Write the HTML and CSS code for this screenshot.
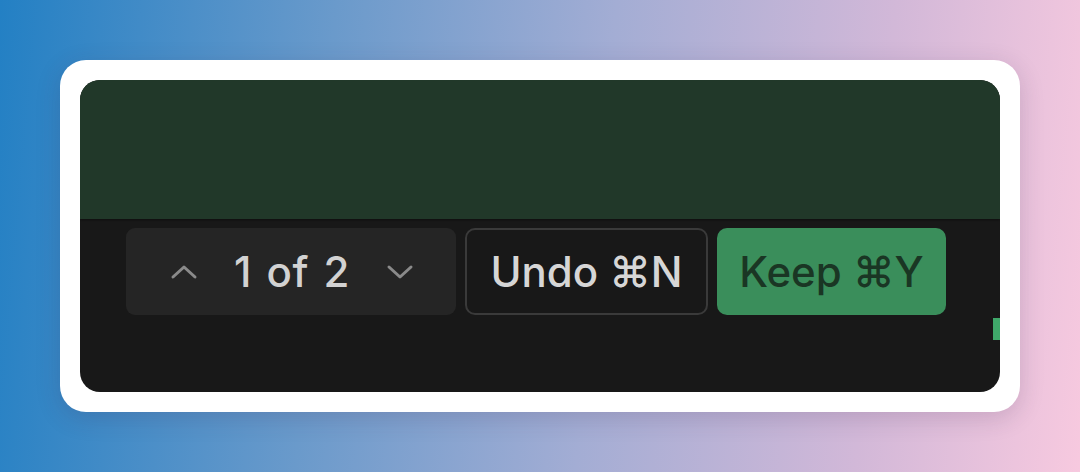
FILE: index.html
```html
<!DOCTYPE html>
<html>
<head>
<meta charset="utf-8">
<link rel="stylesheet" href="styles.css">
</head>
<body>
<div class="frame">
  <div class="card">
    <div class="panel">
      <div class="editor-top"></div>
      <div class="editor-bottom">
        <div class="actions">
          <div class="nav">
            <svg class="chev" viewBox="0 0 28 16" width="28" height="16"><path d="M3 13 L14 3 L25 13" fill="none" stroke="#8a8a8a" stroke-width="3" stroke-linecap="round" stroke-linejoin="round"/></svg>
            <span class="count">1 of 2</span>
            <svg class="chev" viewBox="0 0 28 16" width="28" height="16"><path d="M3 3 L14 13 L25 3" fill="none" stroke="#8a8a8a" stroke-width="3" stroke-linecap="round" stroke-linejoin="round"/></svg>
          </div>
          <div class="btn undo">Undo ⌘N</div>
          <div class="btn keep">Keep ⌘Y</div>
        </div>
        <div class="marker"></div>
      </div>
    </div>
  </div>
</div>
</body>
</html>
```
FILE: styles.css
```css
* { box-sizing: border-box; }
html, body { margin: 0; padding: 0; }
body {
  width: 1080px;
  height: 472px;
  overflow: hidden;
  background: linear-gradient(95deg, #2380c4 0%, #6a9acb 30%, #a3add4 55%, #d2b8d8 80%, #f7c9df 100%);
  font-family: "Inter", "Liberation Sans", sans-serif;
}
.frame {
  padding: 60px;
  height: 100%;
}
.card {
  background: #ffffff;
  border-radius: 26px;
  padding: 20px;
  height: 352px;
  box-shadow: 0 6px 24px rgba(60, 40, 80, 0.18);
}
.panel {
  height: 312px;
  border-radius: 20px;
  overflow: hidden;
  background: #181818;
  display: flex;
  flex-direction: column;
}
.editor-top {
  height: 139px;
  background: #213829;
  box-shadow: 0 1px 2px rgba(0,0,0,0.4);
}
.editor-bottom {
  flex: 1;
  position: relative;
  padding: 9px 0 0 46px;
}
.actions {
  display: flex;
  gap: 9px;
  height: 87px;
}
.nav {
  width: 330px;
  background: #252525;
  border-radius: 9px;
  display: flex;
  align-items: center;
  justify-content: space-between;
  padding: 0 42px 0 44px;
}
.count {
  color: #d2d2d2;
  font-size: 42px;
  font-weight: 500;
  word-spacing: 3px;
  letter-spacing: 0.5px;
}
.btn {
  display: flex;
  align-items: center;
  justify-content: center;
  border-radius: 10px;
  font-size: 42px;
  font-weight: 500;
}
.undo {
  width: 243px;
  border: 2px solid #3a3a3a;
  color: #d6d6d6;
  background: #181818;
}
.keep {
  width: 229px;
  background: #3a8e5b;
  color: #1a3624;
}
.marker {
  position: absolute;
  right: 0;
  top: 99px;
  width: 7px;
  height: 22px;
  background: #3fa86a;
}
```
